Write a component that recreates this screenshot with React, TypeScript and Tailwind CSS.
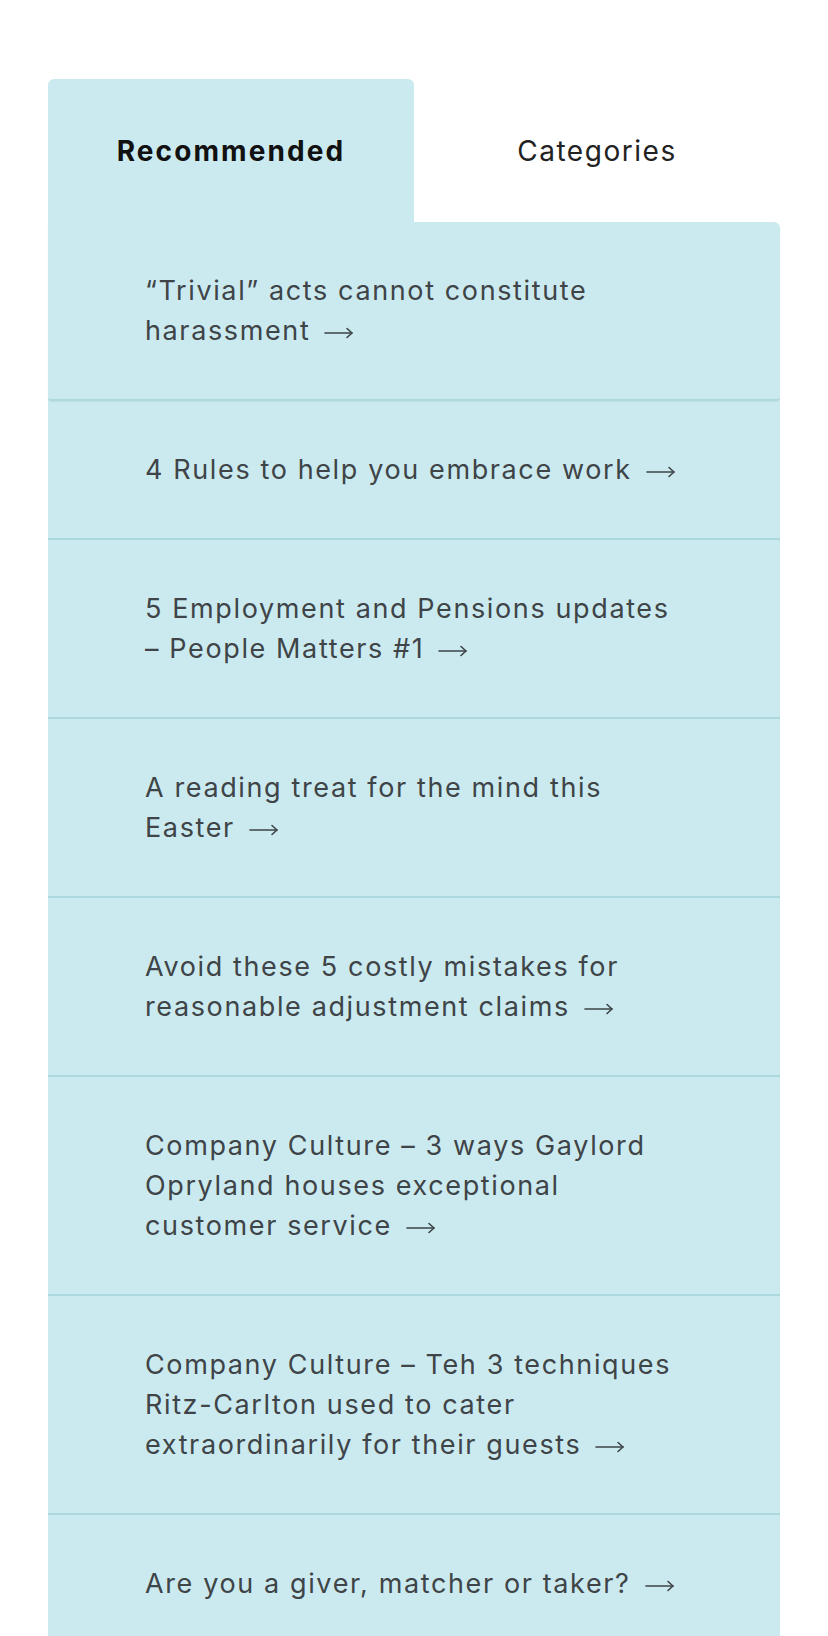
import React, { useState } from "react";

const articles = [
  "\u201CTrivial\u201D acts cannot constitute harassment",
  "4 Rules to help you embrace work",
  "5 Employment and Pensions updates \u2013 People Matters #1",
  "A reading treat for the mind this Easter",
  "Avoid these 5 costly mistakes for reasonable adjustment claims",
  "Company Culture \u2013 3 ways Gaylord Opryland houses exceptional customer service",
  "Company Culture \u2013 Teh 3 techniques Ritz-Carlton used to cater extraordinarily for their guests",
  "Are you a giver, matcher or taker?",
];

function Arrow() {
  return (
    <svg
      width="30"
      height="12"
      viewBox="0 0 30 12"
      className="ml-[14px] inline-block align-[1px]"
      fill="none"
      stroke="#3e4447"
      strokeWidth="1.6"
      strokeLinecap="round"
      strokeLinejoin="round"
    >
      <path d="M1 6h27" />
      <path d="M23 1.5l5 4.5-5 4.5" />
    </svg>
  );
}

export default function App() {
  const [tab, setTab] = useState("recommended");

  return (
    <div
      className="min-h-[1636px] bg-white pt-[79px] px-[48px]"
      style={{ fontFamily: "Inter, 'Noto Sans', sans-serif" }}
    >
      {/* Tabs */}
      <div className="grid grid-cols-2">
        <button
          onClick={() => setTab("recommended")}
          className="h-[143px] rounded-t-[6px] bg-[#cbeaef] text-[28px] font-bold text-[#111] tracking-[0.075em]"
        >
          Recommended
        </button>
        <button
          onClick={() => setTab("categories")}
          className="h-[143px] text-[28px] text-[#222] tracking-[0.055em]"
        >
          Categories
        </button>
      </div>

      {/* List */}
      <ul className="rounded-tr-[6px] bg-[#cbeaef]">
        {articles.map((title, i) => (
          <li
            key={i}
            className={
              i === 0
                ? "rounded-b-[4px] border-b-2 border-[#add8de] shadow-[0_1px_2px_rgba(0,0,0,0.06)]"
                : "border-b-2 border-[#add8de]"
            }
          >
            <a
              href="#"
              className="block pt-[49px] pb-[48px] pl-[97px] pr-[97px] text-[27px] leading-[40px] tracking-[0.06em] text-[#3e4447]"
            >
              {title}
              <Arrow />
            </a>
          </li>
        ))}
      </ul>
    </div>
  );
}
